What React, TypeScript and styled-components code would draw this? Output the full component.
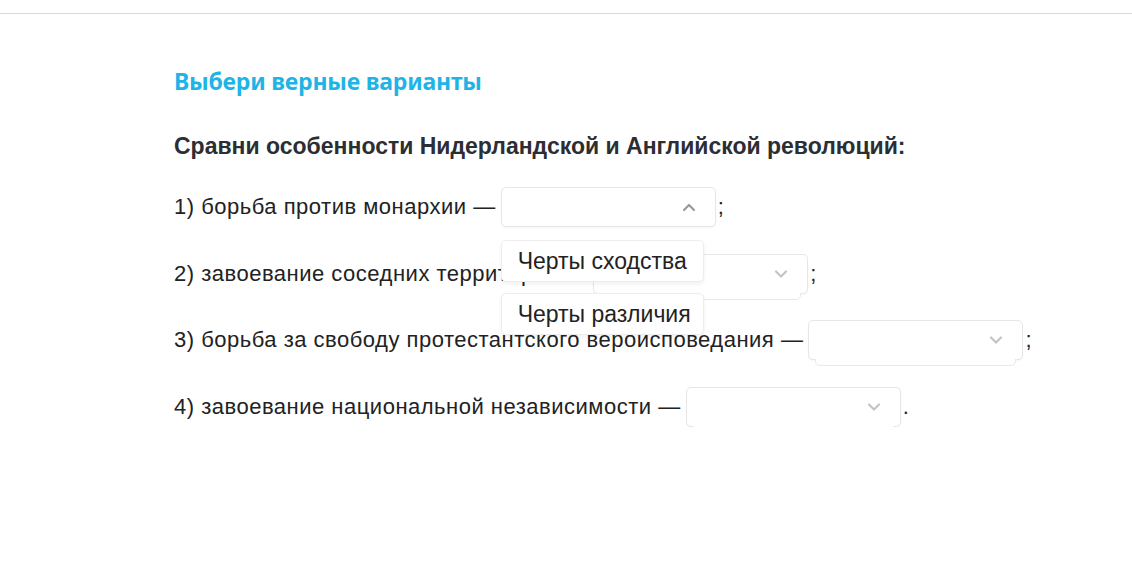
import React, { useState } from "react";
import styled, { createGlobalStyle } from "styled-components";

const GlobalStyle = createGlobalStyle`
  html, body { margin: 0; padding: 0; background: #fff; }
  body { font-family: "Liberation Sans", Arial, sans-serif; color: #222; }
`;

const OPTIONS = ["Черты сходства", "Черты различия"];

const ROWS = [
  { label: "1) борьба против монархии —", end: ";" },
  { label: "2) завоевание соседних территорий —", end: ";" },
  { label: "3) борьба за свободу протестантского вероисповедания —", end: ";" },
  { label: "4) завоевание национальной независимости —", end: "." },
];

function Chevron({ up }: { up?: boolean }) {
  return (
    <svg width="14" height="9" viewBox="0 0 14 9" aria-hidden>
      <path
        d={up ? "M2 7.5 L7 2.5 L12 7.5" : "M2 2 L7 7 L12 2"}
        fill="none"
        stroke="currentColor"
        strokeWidth="2.2"
        strokeLinecap="round"
        strokeLinejoin="round"
      />
    </svg>
  );
}

export default function App() {
  const [open, setOpen] = useState<number | null>(0);

  return (
    <>
      <GlobalStyle />
      <TopBar />
      <Main>
        <Title>Выбери верные варианты</Title>
        <Question>Сравни особенности Нидерландской и Английской революций:</Question>
        <List>
          {ROWS.map((row, i) => (
            <Row key={i}>
              <Label>{row.label}</Label>
              <SelectWrap>
                <Select
                  $open={open === i}
                  onClick={() => setOpen(open === i ? null : i)}
                >
                  <Arrow $open={open === i}>
                    <Chevron up={open === i} />
                  </Arrow>
                </Select>
                {open === i && (
                  <Menu>
                    {OPTIONS.map((o) => (
                      <Option key={o} onClick={() => setOpen(null)}>
                        {o}
                      </Option>
                    ))}
                  </Menu>
                )}
              </SelectWrap>
              <End>{row.end}</End>
            </Row>
          ))}
        </List>
      </Main>
    </>
  );
}

// ===================== styled ===================== //
const TopBar = styled.div`
  height: 13px;
  border-bottom: 1px solid #dadada;
`;

const Main = styled.main`
  padding: 52px 0 0 174px;
`;

const Title = styled.h2`
  margin: 0;
  font-family: "Noto Sans", "Open Sans", sans-serif;
  font-weight: 700;
  font-size: 23px;
  line-height: 30px;
  letter-spacing: -0.2px;
  color: #1eb4e6;
`;

const Question = styled.p`
  margin: 36px 0 0;
  font-weight: 700;
  font-size: 23px;
  line-height: 28px;
  color: #2b2e33;
`;

const List = styled.div`
  display: grid;
  row-gap: 26.5px;
  margin-top: 27px;
`;

const Row = styled.div`
  display: flex;
  align-items: center;
  height: 40px;
  font-size: 22px;
  letter-spacing: 0.5px;
  color: #222;
  white-space: nowrap;
`;

const Label = styled.span`
  flex: none;
`;

const SelectWrap = styled.div`
  position: relative;
  flex: none;
  margin-left: 5px;
`;

const Select = styled.div<{ $open?: boolean }>`
  position: relative;
  width: 213px;
  height: 38px;
  border: 1px solid #e6e6e6;
  border-radius: 5px;
  background: #fff;
  cursor: pointer;
  box-shadow: 0 1px 2px rgba(0, 0, 0, 0.04);
  &::after {
    content: "";
    display: ${({ $open }) => ($open ? "none" : "block")};
    position: absolute;
    left: 6px;
    right: 6px;
    top: 100%;
    height: 6px;
    border: 1px solid #e9e9e9;
    border-top: none;
    border-radius: 0 0 5px 5px;
    background: #fff;
  }
`;

const Arrow = styled.span<{ $open?: boolean }>`
  position: absolute;
  right: 19px;
  top: 50%;
  transform: translateY(-50%);
  display: flex;
  color: ${({ $open }) => ($open ? "#9a9a9a" : "#c4c4c4")};
`;

const End = styled.span`
  margin-left: 2px;
`;

const Menu = styled.div`
  position: absolute;
  top: 53px;
  left: 0;
  z-index: 5;
  display: grid;
  row-gap: 11px;
`;

const Option = styled.div`
  width: 201px;
  height: 40px;
  box-sizing: content-box;
  display: flex;
  align-items: center;
  border: 1px solid #ededed;
  border-radius: 5px;
  background: #fff;
  box-shadow: 0 2px 4px rgba(0, 0, 0, 0.06);
  font-size: 23px;
  letter-spacing: 0;
  color: #222;
  text-indent: 16px;
  cursor: pointer;
`;
